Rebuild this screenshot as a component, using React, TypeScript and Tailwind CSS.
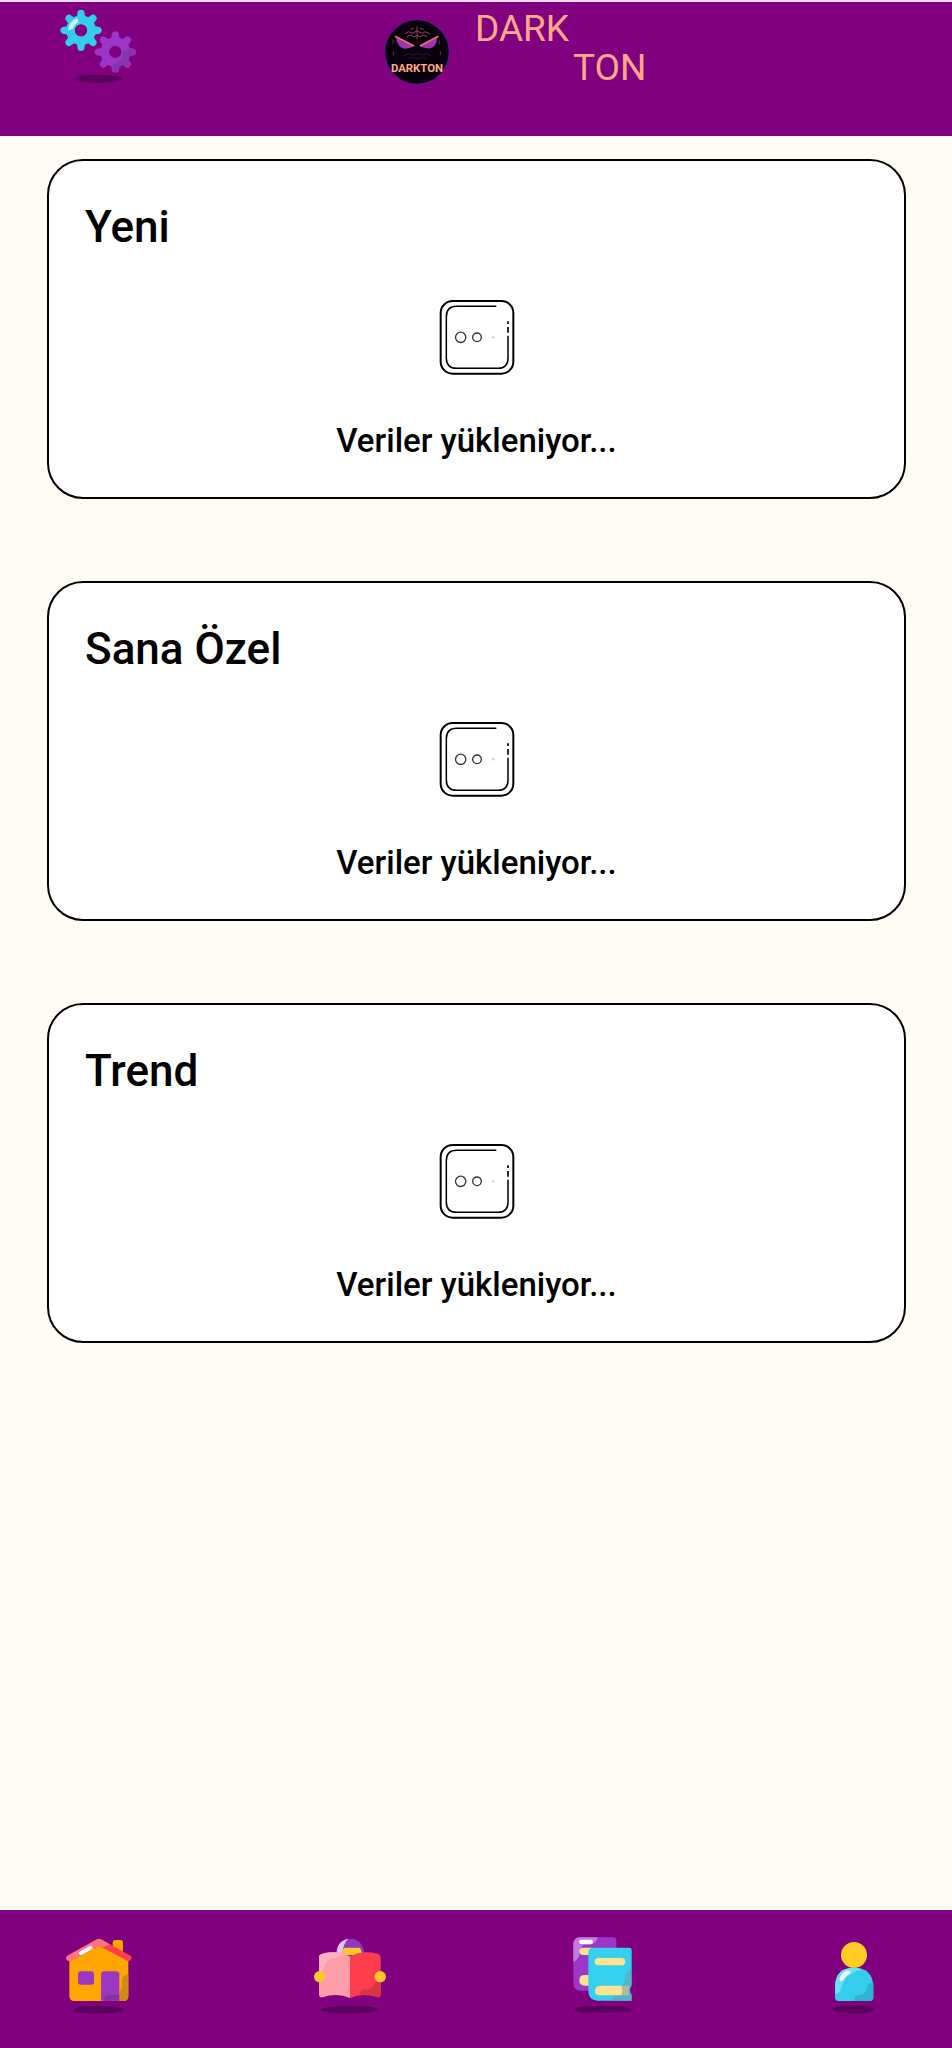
import React from "react";

const SECTIONS = ["Yeni", "Sana Özel", "Trend"];

const TEETH = [0, 45, 90, 135, 180, 225, 270, 315];

function Gear({ cx, cy, color }: { cx: number; cy: number; color: string }) {
  return (
    <g transform={`translate(${cx} ${cy})`} fill={color}>
      {TEETH.map((angle) => (
        <path
          key={angle}
          transform={`rotate(${angle})`}
          d="M-13 -36 L-10 -56 Q-8 -62 0 -62 Q8 -62 10 -56 L13 -36Z"
        />
      ))}
      <circle r="31.500" fill="none" stroke={color} strokeWidth="26" />
    </g>
  );
}

function GearsIcon() {
  return (
    <svg viewBox="48 12 252 252" className="size-[84px]" aria-hidden="true">
      <ellipse cx="176" cy="236" rx="72" ry="12" fill="#5c0060" />
      <Gear cx={123} cy={91} color="#35cdec" />
      <path d="M84 91 A39 39 0 0 1 112 54 L116 67 Q102 73 98 88Z" fill="#c4f3fc" />
      <Gear cx={226} cy={156} color="#9c36c6" />
      <path
        d="M249 151 L283 148 Q288 156 281 162 L270 166 L266 179 Q275 190 267 197 Q260 201 249 194 L240 201 L235 214 Q226 220 219 213 L218 198 Q226 184 242 178 Q250 166 249 151Z"
        fill="#7f35a0"
        opacity=".75"
      />
    </svg>
  );
}

function LogoIcon() {
  return (
    <svg viewBox="13 17 216 216" className="size-[72px]" role="img" aria-label="Dark Ton">
      <circle cx="121" cy="125" r="97" fill="#09000d" stroke="#65108f" strokeWidth="4" />
      <g fill="none" stroke="#92464f" strokeWidth="3">
        <path d="M121 48V87M84 71l12-7 10 5 15-7 15 7 10-5 14 7M91 79l12-5 9 6 9-5 9 5 9-6 12 5M101 57l10-3M130 54l11 3" />
        <path d="M49 88v12M188 90v12M50 124v12M191 122v12" strokeWidth="2" />
      </g>
      <path d="M58 82Q63 110 81 115Q100 116 111 108Z" fill="#a034b0" />
      <path d="M182 82Q179 108 162 114Q145 116 130 108Z" fill="#a034b0" />
      <path d="M55 78L112 107M185 78L130 107" stroke="#ed7774" strokeWidth="5" />
      <path d="M78 137l15-8 15 5 13-5 14 5 15-5 14 8M93 145l15-4 15 5 15-5 12 4" fill="none" stroke="#2b1425" strokeWidth="3" />
      <text
        x="121"
        y="185"
        textAnchor="middle"
        fontFamily="Roboto, sans-serif"
        fontWeight="700"
        fontSize="34"
        fill="#ffac80"
      >
        DARKTON
      </text>
    </svg>
  );
}

function LoaderIcon() {
  return (
    <svg viewBox="51 51 240 240" className="size-20" fill="none" stroke="#000" aria-hidden="true">
      <rect x="62" y="63" width="218" height="218" rx="36" strokeWidth="6" />
      <path d="M229 79H110Q79 79 79 110V234Q79 265 110 265H234Q264 265 264 234V167" strokeWidth="4.500" />
      <path d="M264 124V132M264 141V158" strokeWidth="5" />
      <circle cx="122" cy="172" r="15.500" stroke="#333" strokeWidth="4" />
      <circle cx="171" cy="172" r="13" stroke="#333" strokeWidth="4" />
      <circle cx="220" cy="172" r="2.500" stroke="#aaa" strokeWidth="2" />
    </svg>
  );
}

function HomeIcon() {
  return (
    <svg viewBox="27 108 240 240" className="size-20" aria-hidden="true">
      <ellipse cx="146" cy="329" rx="76" ry="11" fill="#5c0060" />
      <path d="M188 160V128Q188 120 196 120H211Q219 120 219 128V175Z" fill="#ffa500" />
      <path d="M58 175L147 125L235 175V288Q235 303 220 303H73Q58 303 58 288Z" fill="#ffa500" />
      <path
        d="M141 118Q147 115 153 118L242 167Q247 171 244 177Q239 186 232 182L147 137L62 182Q54 186 49 178Q47 171 52 167Z"
        fill="#ff3e4d"
      />
      <path d="M52 167L141 118Q147 115 153 118L180 133L160 142L147 137L62 182Q54 186 49 178Q47 171 52 167Z" fill="#ff7286" />
      <path d="M86 157L121 137Q129 138 127 147L95 165Q86 166 86 157Z" fill="#fff" />
      <rect x="84" y="214" width="48" height="40" rx="8" fill="#9a38c2" />
      <path d="M153 302V223Q153 214 162 214H199Q208 214 208 223V302Z" fill="#9a38c2" />
      <path d="M235 223V288Q235 303 220 303H208V275Q218 267 215 242Q217 225 235 223Z" fill="#d18b12" />
      <path d="M208 283V302H160Q160 285 177 285Q194 287 208 283Z" fill="#8331a6" />
    </svg>
  );
}

function ReadIcon() {
  return (
    <svg viewBox="30 108 240 240" className="size-20" aria-hidden="true">
      <ellipse cx="149" cy="329" rx="87" ry="11" fill="#5c0060" />
      <circle cx="151" cy="157" r="41" fill="#8c39bd" />
      <path d="M110 161Q109 124 145 116Q130 130 127 160Z" fill="#dfc2f5" />
      <path d="M132 143H178Q185 146 186 165H126Q126 151 132 143Z" fill="#ffc62b" />
      <path d="M57 169Q57 164 67 161Q114 150 150 170V294Q112 277 68 292Q57 294 57 285Z" fill="#ff9eaa" />
      <path d="M57 169Q57 164 67 161Q103 153 130 161Q119 173 94 177Q77 180 73 199Q68 221 57 222Z" fill="#ffb4bd" />
      <path d="M150 170Q186 150 232 161Q242 164 242 173V285Q240 294 231 291Q187 277 150 294Z" fill="#ff3e4d" />
      <path d="M242 244V285Q240 294 231 291Q205 282 179 284Q179 270 195 268Q219 269 224 250Q228 243 242 244Z" fill="#d63743" />
      <circle cx="59" cy="230" r="17" fill="#ffc62b" />
      <circle cx="241" cy="230" r="17" fill="#ffc62b" />
    </svg>
  );
}

function LibraryIcon() {
  return (
    <svg viewBox="5 108 240 240" className="size-20" aria-hidden="true">
      <ellipse cx="128" cy="328" rx="87" ry="11" fill="#5c0060" />
      <path d="M58 112H158Q168 112 168 122V272H58Q39 270 39 248V135Q39 112 58 112Z" fill="#9c36c6" />
      <path d="M58 112H112Q108 130 89 135H70Q60 140 58 160Q55 180 39 186V135Q39 112 58 112Z" fill="#c17be0" />
      <rect x="57" y="119" width="40" height="13" rx="4" fill="#fff" />
      <path d="M97 143H68Q57 143 57 154T68 165H97ZM97 225H73Q57 225 57 241T73 257H97Z" fill="#ffe28f" />
      <path d="M98 143H207Q214 143 214 150V256Q204 271 214 285V302H111Q84 300 84 274V157Q84 143 98 143Z" fill="#35d0f0" />
      <rect x="103" y="174" width="92" height="22" rx="11" fill="#ffe28f" />
      <path d="M120 257H208Q201 271 208 286H120Q104 286 104 272T120 257Z" fill="#ffe28f" />
      <path
        d="M214 208V256Q204 271 214 285V302H154Q154 288 166 286H184Q187 273 184 257Q197 247 195 229Q197 211 214 208Z"
        fill="#6c9da5"
        opacity=".55"
      />
    </svg>
  );
}

function ProfileIcon() {
  return (
    <svg viewBox="39 108 240 240" className="size-20" aria-hidden="true">
      <ellipse cx="161" cy="328" rx="64" ry="12" fill="#5c0060" />
      <circle cx="162" cy="165" r="39" fill="#ffcd24" />
      <path d="M105 258Q107 203 162 203Q217 203 220 258V292Q220 303 209 303H116Q105 303 105 292Z" fill="#35cdec" />
      <path d="M105 258Q107 203 162 203Q176 203 186 208Q155 218 136 235Q126 256 121 272Q116 281 105 283Z" fill="#69dff5" />
      <path d="M118 238Q123 217 144 211Q154 211 151 221Q137 226 130 241Q119 247 118 238Z" fill="#e8fbff" />
      <path d="M220 248V292Q220 303 209 303H163Q162 287 176 285Q200 283 202 262Q203 247 220 248Z" fill="#2cb5cf" />
    </svg>
  );
}

const NAV_ITEMS = [
  { label: "Ana sayfa", Icon: HomeIcon },
  { label: "Oku", Icon: ReadIcon },
  { label: "Kitaplık", Icon: LibraryIcon },
  { label: "Profil", Icon: ProfileIcon },
];

function LoadingCard({ title }: { title: string }) {
  return (
    <section className="rounded-[36px] border-2 border-black bg-white px-9 pt-9 pb-[34px]">
      <h2 className="text-[44px] leading-[60px] font-medium">{title}</h2>
      <div className="mt-10 flex flex-col items-center" role="status">
        <LoaderIcon />
        <p className="mt-[42px] text-[33px] leading-[44px] font-medium">Veriler yükleniyor...</p>
      </div>
    </section>
  );
}

export default function App() {
  return (
    <div className="flex min-h-screen flex-col bg-[#fffcf5] font-['Roboto',sans-serif] text-black">
      <header className="grid h-[136px] grid-cols-[1fr_auto_1fr] items-start border-t-2 border-[#eadcea] bg-[#800080]">
        <button type="button" aria-label="Ayarlar" className="mt-0.5 ml-14 justify-self-start">
          <GearsIcon />
        </button>
        <div className="flex items-start gap-[22px]">
          <div className="mt-3.5">
            <LogoIcon />
          </div>
          <h1 className="mt-[7px] w-24 text-[37px] leading-[39px] font-normal text-[#ffa989]">
            <span className="block">DARK</span>
            <span className="ml-[98px] block">TON</span>
          </h1>
        </div>
      </header>

      <main className="flex grow flex-col gap-[82px] pt-[23px] pr-[46px] pb-20 pl-[47px]">
        {SECTIONS.map((title) => (
          <LoadingCard key={title} title={title} />
        ))}
      </main>

      <nav className="flex h-[138px] items-start justify-between bg-[#800080] px-[59px] pt-[26px]">
        {NAV_ITEMS.map(({ label, Icon }) => (
          <a key={label} href="#" aria-label={label}>
            <Icon />
          </a>
        ))}
      </nav>
    </div>
  );
}
